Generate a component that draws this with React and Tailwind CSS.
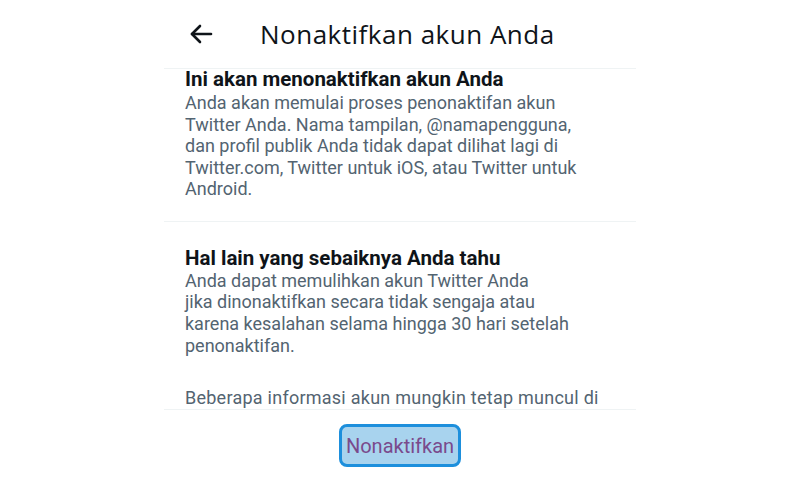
export default function App() {
  return (
    <div className="w-[800px] h-[477px] bg-white overflow-hidden flex justify-center" style={{ fontFamily: "Roboto, 'Liberation Sans', sans-serif" }}>
      <div className="w-[472px] flex flex-col">
        <div className="h-[69px] flex items-center pl-[25px] border-b border-[#eff3f4]">
          <svg width="24" height="20" viewBox="0 0 24 20" fill="none" stroke="#0f1419" strokeWidth="2.6" strokeLinecap="round" strokeLinejoin="round">
            <path d="M22 10H3" />
            <path d="M11 2L3 10l8 8" />
          </svg>
          <div className="ml-[47px] text-[26px] leading-none text-[#0f1419] tracking-[0.5px]" style={{ fontFamily: "'Open Sans', sans-serif" }}>Nonaktifkan akun Anda</div>
        </div>
        <div className="px-[21px] pt-[0px] pb-[21px] border-b border-[#eff3f4]">
          <div className="text-[20.5px] leading-[22px] font-bold text-[#0f1419] mt-[-1px]">Ini akan menonaktifkan akun Anda</div>
          <div className="text-[18px] leading-[21.5px] text-[#536471] mt-[2px]">
            Anda akan memulai proses penonaktifan akun<br />
            Twitter Anda. Nama tampilan, @namapengguna,<br />
            dan profil publik Anda tidak dapat dilihat lagi di<br />
            Twitter.com, Twitter untuk iOS, atau Twitter untuk<br />
            Android.
          </div>
        </div>
        <div className="px-[21px] pt-[25px] flex-1 flex flex-col overflow-hidden">
          <div className="text-[20.5px] leading-[22px] font-bold text-[#0f1419]">Hal lain yang sebaiknya Anda tahu</div>
          <div className="text-[18px] leading-[21.7px] text-[#536471] mt-[1px]">
            Anda dapat memulihkan akun Twitter Anda<br />
            jika dinonaktifkan secara tidak sengaja atau<br />
            karena kesalahan selama hingga 30 hari setelah<br />
            penonaktifan.
          </div>
          <div className="text-[18px] leading-[22px] text-[#536471] mt-[31px] tracking-[0.25px] whitespace-nowrap">Beberapa informasi akun mungkin tetap muncul di</div>
        </div>
        <div className="border-t border-[#eff3f4] h-[68px] flex justify-center pt-[14px]">
          <div className="h-[43px] px-[4px] rounded-[8px] border-[3px] border-[#1d8fdc] bg-[#a8d3ee] flex items-center text-[20px] text-[#7a4a8c]">Nonaktifkan</div>
        </div>
      </div>
    </div>
  );
}
